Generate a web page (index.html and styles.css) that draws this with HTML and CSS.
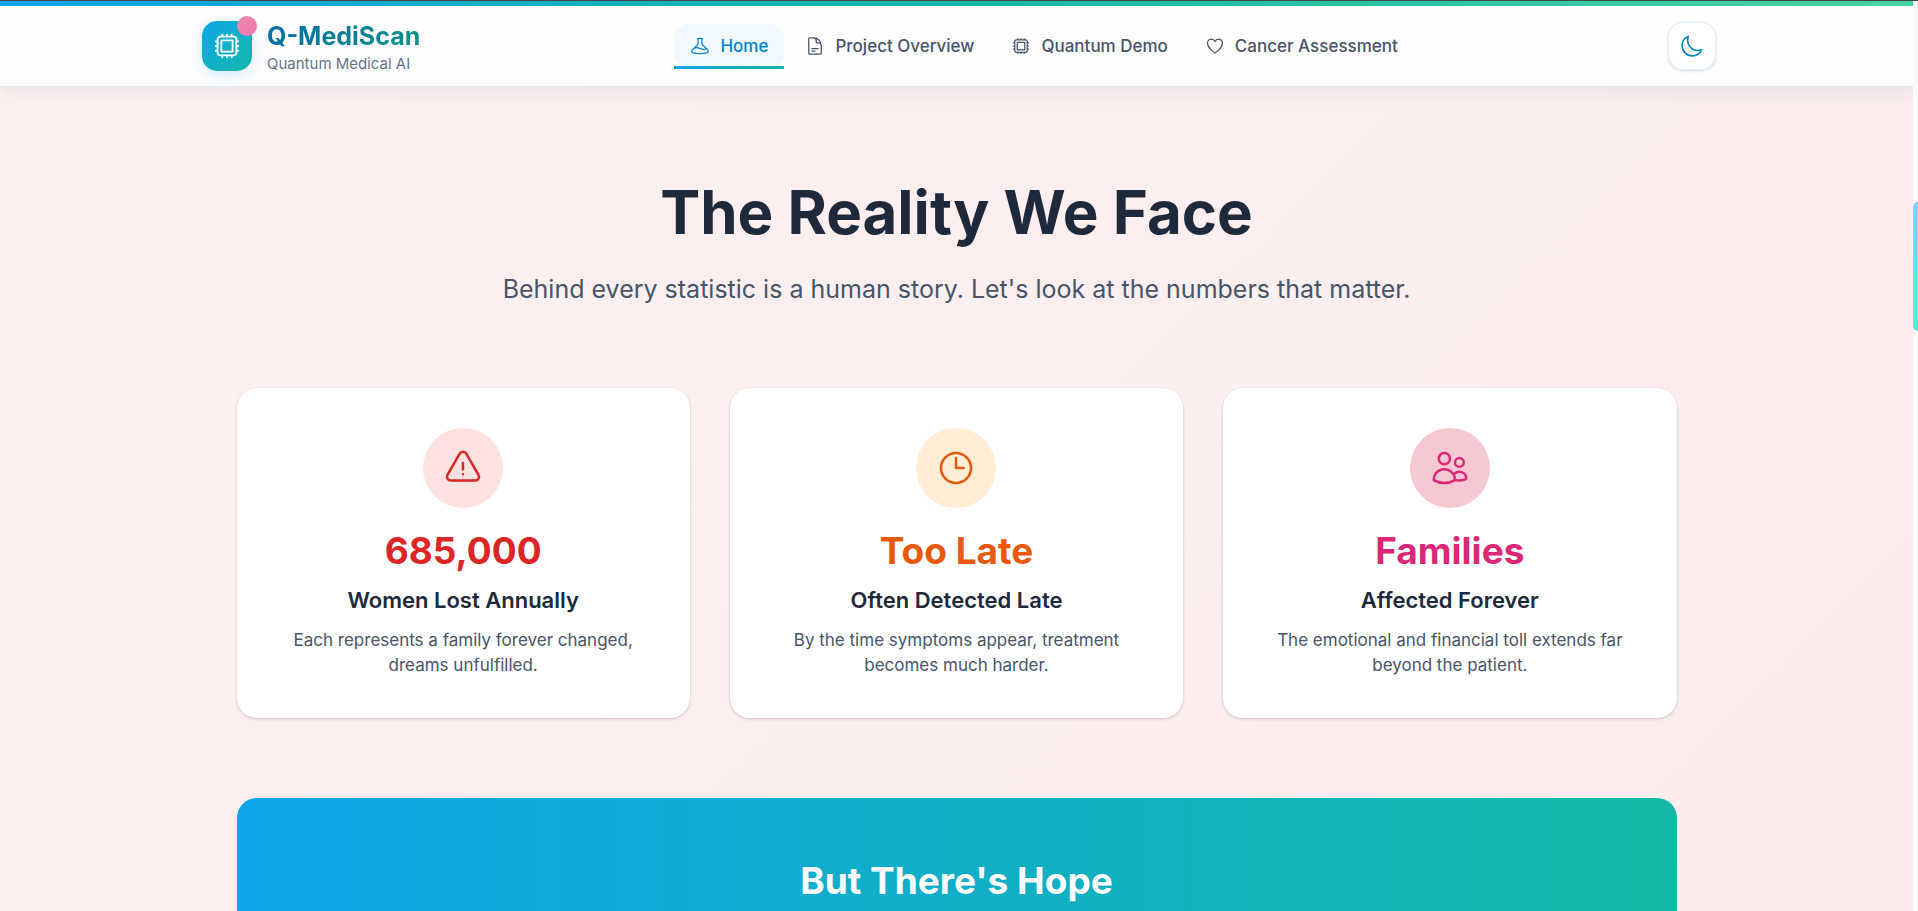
FILE: index.html
```html
<!DOCTYPE html>
<html lang="en">
<head>
    <meta charset="UTF-8">
    <meta name="viewport" content="width=device-width, initial-scale=1.0">
    <title>Q-MediScan</title>
    <link rel="stylesheet" href="styles.css">
</head>
<body>
    <header class="header">
        <div class="header-inner">
            <a class="logo" href="#">
                <span class="logo-mark">
                    <svg class="icon icon-logo" viewBox="0 0 24 24"><path d="M8.25 3v1.5M4.5 8.25H3m18 0h-1.5M4.5 12H3m18 0h-1.5m-15 3.75H3m18 0h-1.5M8.25 19.5V21M12 3v1.5m0 15V21m3.75-18v1.5m0 15V21m-9-1.5h10.5a2.25 2.25 0 002.25-2.25V6.75a2.25 2.25 0 00-2.25-2.25H6.75A2.25 2.25 0 004.5 6.75v10.5a2.25 2.25 0 002.25 2.25zm.75-12h9v9h-9v-9z"/></svg>
                </span>
                <span class="logo-text">
                    <span class="logo-name">Q-MediScan</span>
                    <span class="logo-tagline">Quantum Medical AI</span>
                </span>
            </a>

            <nav class="nav">
                <a class="nav-link active" href="#">
                    <svg class="icon" viewBox="0 0 24 24"><path d="M9.75 3.104v5.714a2.25 2.25 0 01-.659 1.591L5 14.5M9.75 3.104c-.251.023-.501.05-.75.082m.75-.082a24.301 24.301 0 014.5 0m0 0v5.714c0 .597.237 1.17.659 1.591L19.8 15.3M14.25 3.104c.251.023.501.05.75.082M19.8 15.3l-1.57.393A9.065 9.065 0 0112 15a9.065 9.065 0 00-6.23-.693L5 14.5m14.8.8l1.402 1.402c1.232 1.232.65 3.318-1.067 3.611A48.309 48.309 0 0112 21c-2.773 0-5.491-.235-8.135-.687-1.718-.293-2.3-2.379-1.067-3.61L5 14.5"/></svg>
                    Home
                </a>
                <a class="nav-link" href="#overview">
                    <svg class="icon" viewBox="0 0 24 24"><path d="M19.5 14.25v-2.625a3.375 3.375 0 00-3.375-3.375h-1.5A1.125 1.125 0 0113.5 7.125v-1.5a3.375 3.375 0 00-3.375-3.375H8.25m0 12.75h7.5m-7.5 3H12M10.5 2.25H5.625c-.621 0-1.125.504-1.125 1.125v17.25c0 .621.504 1.125 1.125 1.125h12.75c.621 0 1.125-.504 1.125-1.125V11.25a9 9 0 00-9-9z"/></svg>
                    Project Overview
                </a>
                <a class="nav-link" href="#demo">
                    <svg class="icon" viewBox="0 0 24 24"><path d="M8.25 3v1.5M4.5 8.25H3m18 0h-1.5M4.5 12H3m18 0h-1.5m-15 3.75H3m18 0h-1.5M8.25 19.5V21M12 3v1.5m0 15V21m3.75-18v1.5m0 15V21m-9-1.5h10.5a2.25 2.25 0 002.25-2.25V6.75a2.25 2.25 0 00-2.25-2.25H6.75A2.25 2.25 0 004.5 6.75v10.5a2.25 2.25 0 002.25 2.25zm.75-12h9v9h-9v-9z"/></svg>
                    Quantum Demo
                </a>
                <a class="nav-link" href="#assessment">
                    <svg class="icon" viewBox="0 0 24 24"><path d="M21 8.25c0-2.485-2.099-4.5-4.688-4.5-1.935 0-3.597 1.126-4.312 2.733-.715-1.607-2.377-2.733-4.313-2.733C5.1 3.75 3 5.765 3 8.25c0 7.22 9 12 9 12s9-4.78 9-12z"/></svg>
                    Cancer Assessment
                </a>
            </nav>

            <button class="theme-toggle" type="button" aria-label="Toggle dark mode">
                <svg class="icon icon-moon" viewBox="0 0 24 24"><path d="M21.752 15.002A9.718 9.718 0 0118 15.75c-5.385 0-9.75-4.365-9.75-9.75 0-1.33.266-2.597.748-3.752A9.753 9.753 0 003 11.25C3 16.635 7.365 21 12.75 21a9.753 9.753 0 009.002-5.998z"/></svg>
            </button>
        </div>
    </header>

    <main class="reality">
        <div class="container">
            <h1>The Reality We Face</h1>
            <p class="lead">Behind every statistic is a human story. Let's look at the numbers that matter.</p>

            <div class="stats">
                <article class="stat-card red">
                    <div class="stat-icon">
                        <svg class="icon" viewBox="0 0 24 24"><path d="M12 9v3.75m-9.303 3.376c-.866 1.5.217 3.374 1.948 3.374h14.71c1.73 0 2.813-1.874 1.948-3.374L13.949 3.378c-.866-1.5-3.032-1.5-3.898 0L2.697 16.126zM12 15.75h.007v.008H12v-.008z"/></svg>
                    </div>
                    <h2>685,000</h2>
                    <h3>Women Lost Annually</h3>
                    <p>Each represents a family forever changed, dreams unfulfilled.</p>
                </article>
                <article class="stat-card orange">
                    <div class="stat-icon">
                        <svg class="icon" viewBox="0 0 24 24"><path d="M12 6v6h4.5m4.5 0a9 9 0 11-18 0 9 9 0 0118 0z"/></svg>
                    </div>
                    <h2>Too Late</h2>
                    <h3>Often Detected Late</h3>
                    <p>By the time symptoms appear, treatment becomes much harder.</p>
                </article>
                <article class="stat-card pink">
                    <div class="stat-icon">
                        <svg class="icon" viewBox="0 0 24 24"><path d="M15 19.128a9.38 9.38 0 002.625.372 9.337 9.337 0 004.121-.952 4.125 4.125 0 00-7.533-2.493M15 19.128v-.003c0-1.113-.285-2.16-.786-3.07M15 19.128v.106A12.318 12.318 0 018.624 21c-2.331 0-4.512-.645-6.374-1.766l-.001-.109a6.375 6.375 0 0111.964-3.07M12 6.375a3.375 3.375 0 11-6.75 0 3.375 3.375 0 016.75 0zm8.25 2.25a2.625 2.625 0 11-5.25 0 2.625 2.625 0 015.25 0z"/></svg>
                    </div>
                    <h2>Families</h2>
                    <h3>Affected Forever</h3>
                    <p>The emotional and financial toll extends far beyond the patient.</p>
                </article>
            </div>

            <section class="hope">
                <h2>But There's Hope</h2>
            </section>
        </div>
    </main>

    <div class="scrollbar"><div class="scrollbar-thumb"></div></div>
</body>
</html>
```

FILE: styles.css
```css
* {
    box-sizing: border-box;
    margin: 0;
    padding: 0;
}
body {
    font-family: Inter, sans-serif;
    color: #1e293b;
    height: 100vh;
    overflow: hidden;
    border-top: 1px solid #444;
}
a {
    color: inherit;
    text-decoration: none;
}
.icon {
    width: 20px;
    height: 20px;
    flex-shrink: 0;
    fill: none;
    stroke: currentColor;
    stroke-width: 1.5;
    stroke-linecap: round;
    stroke-linejoin: round;
}

/* Header */
.header {
    position: relative;
    background: #fefefe;
    border-bottom: 1px solid #e0e8f0;
    box-shadow: 0 4px 20px rgba(14, 60, 120, 0.08);
}
.header::before {
    content: "";
    display: block;
    height: 5px;
    background: linear-gradient(90deg, #0ea5e9, #14b8a6 50%, #45d3a0);
}
.header-inner {
    display: flex;
    align-items: center;
    justify-content: space-between;
    max-width: 1514px;
    height: 80px;
    margin: 0 auto;
}
.logo {
    display: flex;
    align-items: center;
    gap: 15px;
}
.logo-mark {
    position: relative;
    display: grid;
    place-items: center;
    width: 50px;
    height: 50px;
    border-radius: 15px;
    background: linear-gradient(135deg, #0ea5e9, #14b8a6);
    box-shadow: 0 4px 15px rgba(14, 165, 233, 0.2);
    color: #fff;
}
.logo-mark::after {
    content: "";
    position: absolute;
    top: -5px;
    right: -5px;
    width: 20px;
    height: 20px;
    border-radius: 50%;
    background: linear-gradient(135deg, #e88fa8, #f472b6);
}
.icon-logo {
    width: 30px;
    height: 30px;
}
.logo-text {
    display: flex;
    flex-direction: column;
    padding-top: 5px;
}
.logo-name {
    font-size: 25px;
    font-weight: 700;
    line-height: 30px;
    background: linear-gradient(135deg, #0369a1, #0d9488);
    -webkit-background-clip: text;
    background-clip: text;
    color: transparent;
}
.logo-tagline {
    font-size: 15px;
    line-height: 25px;
    color: #64748b;
}
.nav {
    display: flex;
    gap: 5px;
}
.nav-link {
    position: relative;
    display: flex;
    align-items: center;
    gap: 10px;
    height: 45px;
    padding: 0 16px;
    border-radius: 15px;
    font-size: 17px;
    font-weight: 500;
    color: #475569;
}
.nav-link.active {
    background: #f0f9ff;
    color: #0284c7;
}
.nav-link.active::after {
    content: "";
    position: absolute;
    right: 0;
    bottom: 0;
    left: 0;
    height: 3px;
    background: linear-gradient(90deg, #0ea5e9, #14b8a6);
}
.theme-toggle {
    display: grid;
    place-items: center;
    width: 48px;
    height: 48px;
    border: 1px solid #e0f2fe;
    border-radius: 15px;
    background: #fff;
    box-shadow: 0 1px 3px rgba(0, 0, 0, 0.15);
    color: #0284c7;
    cursor: pointer;
}
.icon-moon {
    width: 25px;
    height: 25px;
}

/* Reality section */
.reality {
    min-height: 100vh;
    margin-right: 5px;
    padding: 88px 40px 0;
    background: linear-gradient(135deg, #fef1f1, #fcebed);
    text-align: center;
}
.container {
    max-width: 1440px;
    margin: 0 auto;
}
h1 {
    font-size: 60px;
    font-weight: 700;
    line-height: 75px;
}
.lead {
    margin-top: 20px;
    font-size: 25px;
    line-height: 38px;
    color: #475569;
}
.stats {
    display: grid;
    grid-template-columns: repeat(3, 1fr);
    gap: 40px;
    margin-top: 80px;
}
.stat-card {
    padding: 40px;
    border-radius: 20px;
    background: #fff;
    box-shadow: 0 1px 3px rgba(0, 0, 0, 0.2);
}
.stat-icon {
    display: grid;
    place-items: center;
    width: 80px;
    height: 80px;
    margin: 0 auto 20px;
    border-radius: 50%;
}
.stat-icon .icon {
    width: 40px;
    height: 40px;
}
.stat-card h2 {
    font-size: 37px;
    font-weight: 700;
    line-height: 45px;
}
.stat-card h3 {
    margin: 10px 0;
    font-size: 22px;
    font-weight: 600;
    line-height: 35px;
}
.stat-card p {
    font-size: 17px;
    line-height: 25px;
    color: #475569;
}
.red h2,
.red .stat-icon {
    color: #dc2626;
}
.red .stat-icon {
    background: #fee2e2;
}
.orange h2,
.orange .stat-icon {
    color: #ea580c;
}
.orange .stat-icon {
    background: #ffedd5;
}
.pink h2,
.pink .stat-icon {
    color: #db2777;
}
.pink .stat-icon {
    background: #f6c8d2;
}

/* Hope banner */
.hope {
    margin-top: 80px;
    padding: 60px;
    border-radius: 20px 20px 0 0;
    background: linear-gradient(90deg, #0ea5e9, #14b8a6);
    color: #fff;
}
.hope h2 {
    font-size: 37px;
    font-weight: 700;
    line-height: 45px;
}

/* Scrollbar */
.scrollbar {
    position: fixed;
    top: 1px;
    right: 0;
    bottom: 0;
    width: 5px;
    padding-top: 201px;
    overflow: hidden;
    background: #f8fafc;
}
.scrollbar-thumb {
    width: 10px;
    height: 129px;
    border-radius: 5px;
    background: linear-gradient(180deg, #7dd3fc, #5eead4);
}
```
